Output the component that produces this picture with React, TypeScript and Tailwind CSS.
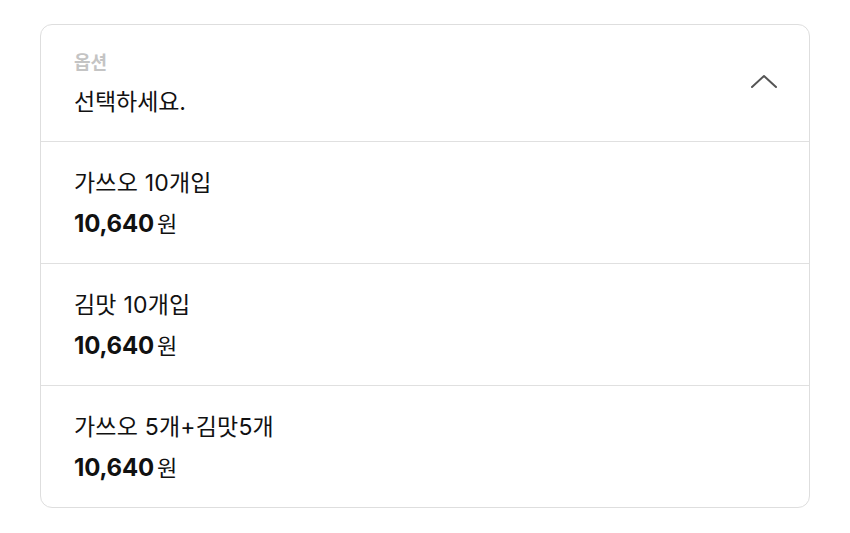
import React from 'react';

const options = [
    { name: '가쓰오 10개입', price: '10,640' },
    { name: '김맛 10개입', price: '10,640' },
    { name: '가쓰오 5개+김맛5개', price: '10,640' },
];

const App = () => {
    return (
        <div
            className="min-h-screen bg-white pt-[24px] px-[40px]"
            style={{ fontFamily: 'Inter, "Noto Sans CJK KR", sans-serif' }}
        >
            <div className="w-[770px] rounded-[12px] border-[1.5px] border-[#dedede] overflow-hidden">
                {/* Select header */}
                <div className="flex items-start justify-between pl-[33px] pr-[31px] pt-[26px] pb-[24px] border-b-[1.5px] border-[#e0e0e0]">
                    <div className="flex flex-col gap-[12px]">
                        <span className="text-[18px] leading-[24px] font-semibold text-[#c4c4c4]">옵션</span>
                        <span className="text-[23px] leading-[30px] text-[#111] tracking-[-0.1px]">선택하세요.</span>
                    </div>
                    <svg width="28" height="16" viewBox="0 0 28 16" fill="none" className="mt-[22px]">
                        <path d="M2 14L14 3L26 14" stroke="#555" strokeWidth="2" strokeLinecap="round" strokeLinejoin="round" />
                    </svg>
                </div>

                {/* Option list */}
                {options.map((opt, i) => (
                    <div
                        key={i}
                        className={`flex flex-col gap-[11px] pl-[33px] pt-[26px] pb-[24px] ${i < options.length - 1 ? 'border-b-[1.5px] border-[#e0e0e0]' : ''}`}
                    >
                        <span className="text-[23px] leading-[30px] text-[#111] tracking-[0.2px]">{opt.name}</span>
                        <span className="text-[22px] leading-[30px] text-[#111] flex items-baseline">
                            <span className="font-bold text-[24px] tracking-[-0.2px]">{opt.price}</span>
                            <span className="ml-[3px]">원</span>
                        </span>
                    </div>
                ))}
            </div>
        </div>
    );
};

export default App;
